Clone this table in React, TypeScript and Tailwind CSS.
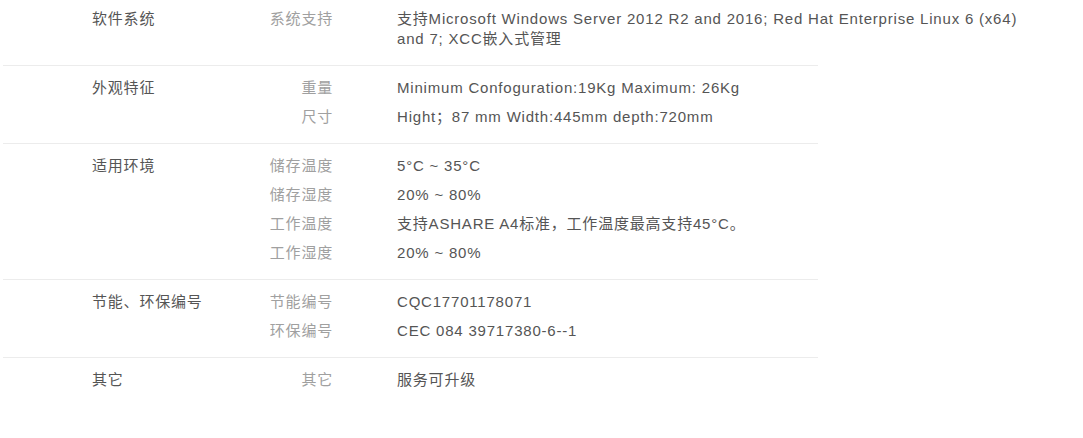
const rows = [
  {
    group: '软件系统',
    items: [
      {
        label: '系统支持',
        value:
          '支持Microsoft Windows Server 2012 R2 and 2016; Red Hat Enterprise Linux 6 (x64) and 7; XCC嵌入式管理',
      },
    ],
  },
  {
    group: '外观特征',
    items: [
      { label: '重量', value: 'Minimum Confoguration:19Kg Maximum: 26Kg' },
      { label: '尺寸', value: 'Hight；87 mm Width:445mm depth:720mm' },
    ],
  },
  {
    group: '适用环境',
    items: [
      { label: '储存温度', value: '5°C ~ 35°C' },
      { label: '储存湿度', value: '20% ~ 80%' },
      { label: '工作温度', value: '支持ASHARE A4标准，工作温度最高支持45°C。' },
      { label: '工作湿度', value: '20% ~ 80%' },
    ],
  },
  {
    group: '节能、环保编号',
    items: [
      { label: '节能编号', value: 'CQC17701178071' },
      { label: '环保编号', value: 'CEC 084 39717380-6--1' },
    ],
  },
  {
    group: '其它',
    items: [{ label: '其它', value: '服务可升级' }],
  },
];

export default function App() {
  return (
    <div
      className="min-h-screen bg-white overflow-hidden text-[15px] leading-5 tracking-[0.8px]"
      style={{ fontFamily: '"Liberation Sans", Arial, "Noto Sans CJK SC", sans-serif' }}
    >
      <div className="ml-[3px] w-[815px] -mt-[3px]">
        {rows.map((row, i) => (
          <div
            key={row.group}
            className={`flex pt-[12px] pb-[7px] ${i < rows.length - 1 ? 'border-b border-[#ececec]' : ''}`}
          >
            <div className="w-[200px] shrink-0 pl-[89px] text-[#555]">{row.group}</div>
            <div className="flex flex-col">
              {row.items.map((item) => (
                <div key={item.label} className="flex pb-[9px]">
                  <div className="w-[130px] shrink-0 text-right text-[#a0a0a0]">{item.label}</div>
                  <div className="w-[699px] shrink-0 pl-[64px] text-[#555]">{item.value}</div>
                </div>
              ))}
            </div>
          </div>
        ))}
      </div>
    </div>
  );
}
